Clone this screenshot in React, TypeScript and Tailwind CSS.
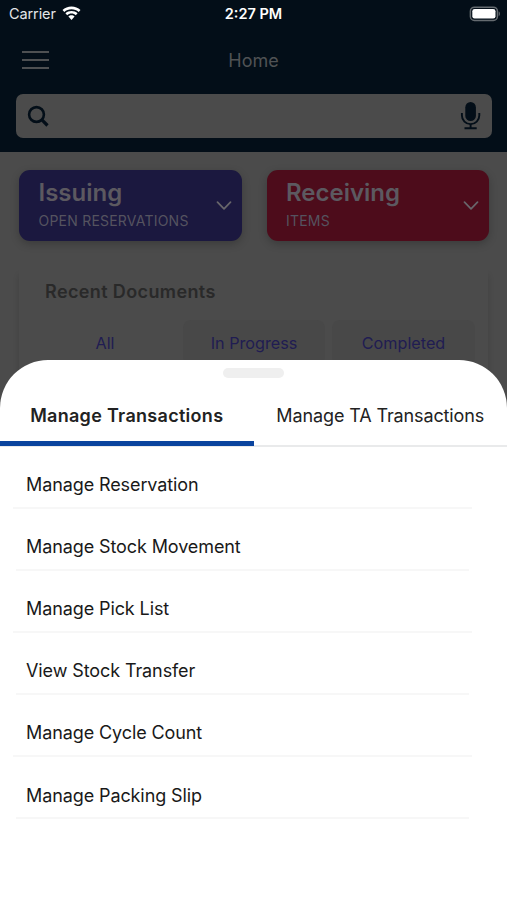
const transactions = [
  'Manage Reservation',
  'Manage Stock Movement',
  'Manage Pick List',
  'View Stock Transfer',
  'Manage Cycle Count',
  'Manage Packing Slip',
];

function Wifi() {
  return (
    <svg width="19" height="15" viewBox="0 0 19 15" fill="#fff" className="-mt-[2px]">
      <path d="M9.5 0.6C6 0.6 2.8 1.9 0.5 4.1L2.3 6C4.2 4.2 6.7 3.2 9.5 3.2s5.3 1 7.2 2.8l1.8-1.9C16.2 1.9 13 .6 9.5 .6Z" />
      <path d="M9.5 5C7.1 5 5 5.9 3.4 7.3L5.2 9.2C6.3 8.2 7.8 7.5 9.5 7.5s3.2.7 4.3 1.7l1.8-1.9C14 5.9 11.9 5 9.5 5Z" />
      <path d="M9.5 9.2c-1.2 0-2.3.5-3.1 1.2l3.1 3.5 3.1-3.5c-.8-.7-1.9-1.2-3.1-1.2Z" />
    </svg>
  );
}

function StatusBar() {
  return (
    <div className="grid h-7 grid-cols-3 items-center text-white">
      <div className="flex items-center gap-[6px] pl-[9px]">
        <span className="text-[14.5px] tracking-[-0.1px] text-[#e4e6e8]">Carrier</span>
        <Wifi />
      </div>
      <span className="text-center text-[14.5px] font-semibold">2:27 PM</span>
      <svg className="-mt-[1px] mr-[6px] justify-self-end" width="32" height="16" viewBox="0 0 32 16">
        <rect x="1.4" y="1.2" width="27" height="13.2" rx="4" fill="none" stroke="#656b70" strokeWidth="1.5" />
        <rect x="3.3" y="3" width="23.2" height="9.6" rx="2.3" fill="#fff" />
        <path d="M29.7 5.5c1.6.4 1.6 4.2 0 4.6Z" fill="#656b70" />
      </svg>
    </div>
  );
}

function SearchBox() {
  return (
    <div className="ml-[16px] mr-[15px] mt-[2px] flex h-[44px] items-center justify-between rounded-[7px] bg-[#4b4b4b] px-[11px]">
      <svg className="mt-[1px]" width="23" height="23" viewBox="0 0 23 23" fill="none" stroke="#030e18">
        <circle cx="9.5" cy="9.5" r="7.4" strokeWidth="2.6" />
        <path d="M14.7 14.7L20.5 20.5" strokeWidth="3.2" />
      </svg>
      <svg className="-mt-[2px]" width="21" height="29" viewBox="0 0 21 29" fill="none" stroke="#030e18">
        <rect x="5.3" y="1" width="10.6" height="19" rx="5.3" fill="#030e18" stroke="none" />
        <path d="M1.9 12v2.4a8.7 8.7 0 0 0 17.4 0V12" strokeWidth="1.9" />
        <path d="M10.6 23v4M4.5 27.3h12.2" strokeWidth="1.9" />
      </svg>
    </div>
  );
}

function SummaryCard({ title, subtitle, color }: { title: string; subtitle: string; color: string }) {
  return (
    <div className={`flex h-[71px] flex-1 items-center justify-between rounded-[11px] pl-[19.5px] pr-[10px] shadow-[0_3px_9px_rgba(0,0,0,0.22)] ${color}`}>
      <div className="flex h-full flex-col pt-[8px]">
        <span className="text-[24px] font-semibold leading-[30px] text-[#5c5960]">{title}</span>
        <span className="mt-[3px] text-[14px] leading-[20px] tracking-[0.22px] text-[#55535f]">{subtitle}</span>
      </div>
      <svg width="16" height="10" viewBox="0 0 16 10" fill="none" stroke="#68666b" strokeWidth="1.7" strokeLinecap="round" strokeLinejoin="round">
        <path d="M1.5 1.2L8 7.9l6.5-6.7" />
      </svg>
    </div>
  );
}

function RecentDocuments() {
  return (
    <div className="mx-[19px] mt-[24px] h-[150px] bg-[#4b4b4b] shadow-[0_10px_6px_rgba(0,0,0,0.14)]">
      <h2 className="pl-[26px] pt-[13px] text-[18px] font-semibold leading-[28px] tracking-[0.38px] text-[#292929]">Recent Documents</h2>
      <div className="mt-[14px] grid grid-cols-[157px_142px_143px] gap-x-[7px] text-center text-[16.2px] leading-[46px] text-[#201c52]">
        <span className="pl-[15px]">All</span>
        <span className="rounded-[8px] bg-[#484848]">In Progress</span>
        <span className="rounded-[8px] bg-[#484848]">Completed</span>
      </div>
    </div>
  );
}

function TransactionSheet() {
  return (
    <section className="absolute inset-x-0 bottom-0 top-[360px] overflow-hidden rounded-t-[48px] bg-white">
      <div className="mx-auto mt-[8px] h-[10px] w-[61px] rounded-full bg-[#efefef]" />
      <div className="grid h-[69px] grid-cols-2 border-b-2 border-[#e9eaeb] text-[18px] text-[#222]">
        <div className="h-[67.5px] border-b-[5px] border-[#0a449e] text-center font-semibold leading-[75px] tracking-[0.3px]">
          Manage Transactions
        </div>
        <div className="text-center leading-[75px] tracking-[-0.12px]">Manage TA Transactions</div>
      </div>
      <ul>
        {transactions.map((label, i) => (
          <li
            key={label}
            className={`flex h-[62px] items-end border-b-2 border-[#f7f7f7] ${
              i % 2 === 0 ? 'ml-[13px] mr-[35px] pl-[13px]' : 'ml-[16px] mr-[38px] pl-[10px]'
            }`}
          >
            <span className={`text-[18px] leading-[26px] tracking-[-0.1px] text-[#191919] ${i === 5 ? 'pb-[8px]' : 'pb-[9px]'}`}>
              {label}
            </span>
          </li>
        ))}
      </ul>
    </section>
  );
}

export default function App() {
  return (
    <main className="relative h-[900px] w-[507px] overflow-hidden bg-[#4b4b4b] font-['Inter',sans-serif]">
      <header className="h-[152px] bg-[#030e18]">
        <StatusBar />
        <div className="grid h-[64px] grid-cols-3 items-center">
          <div className="ml-[22px] flex w-[27px] flex-col gap-[6px]">
            <i className="h-[2px] bg-[#4e5052]" />
            <i className="h-[2px] bg-[#4e5052]" />
            <i className="h-[2px] bg-[#4e5052]" />
          </div>
          <h1 className="text-center text-[18px] text-[#505254]">Home</h1>
        </div>
        <SearchBox />
      </header>
      <div className="flex gap-[25px] pl-[19px] pr-[18px] pt-[18px]">
        <SummaryCard title="Issuing" subtitle="OPEN RESERVATIONS" color="bg-[#1b183f]" />
        <SummaryCard title="Receiving" subtitle="ITEMS" color="bg-[#4d0c1b]" />
      </div>
      <RecentDocuments />
      <TransactionSheet />
    </main>
  );
}
